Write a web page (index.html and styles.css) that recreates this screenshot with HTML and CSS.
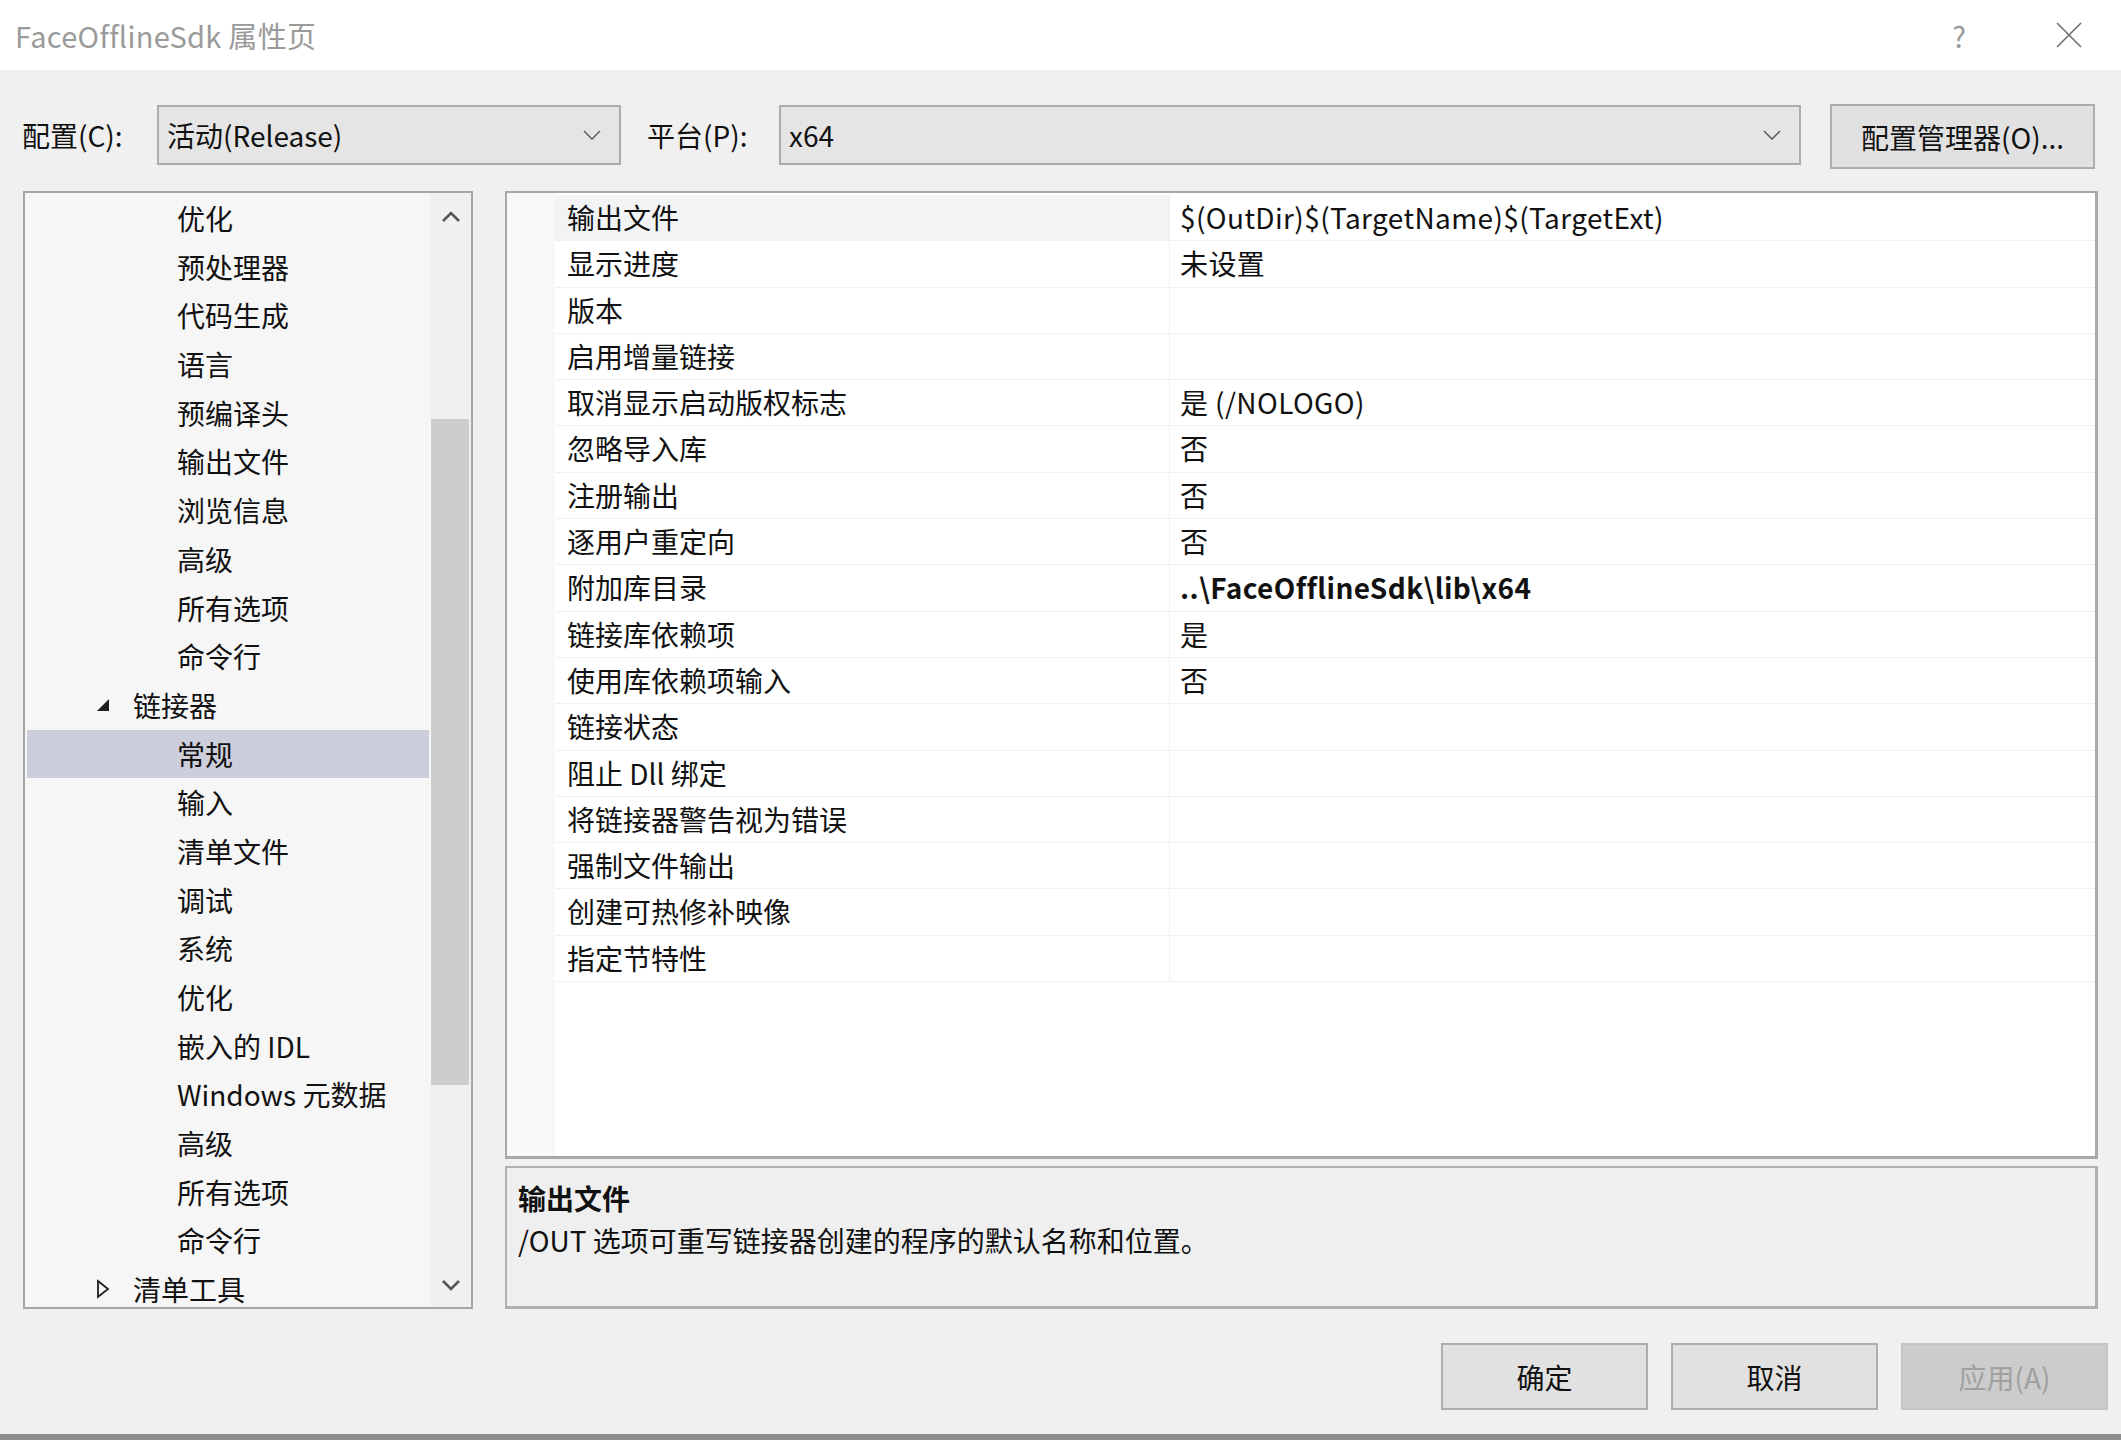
FILE: index.html
```html
<!DOCTYPE html>
<html lang="zh-CN">
<head>
  <meta charset="UTF-8">
  <title>FaceOfflineSdk 属性页</title>
  <link rel="stylesheet" href="styles.css">
</head>
<body>
  <div class="dialog">

    <!-- 标题栏 -->
    <div class="titlebar">
      <span class="title">FaceOfflineSdk 属性页</span>
      <div class="title-btns">
        <span class="help">?</span>
        <svg class="close" width="28" height="28" viewBox="0 0 28 28"><path d="M2 2 L26 26 M26 2 L2 26" stroke="#6f6f6f" stroke-width="1.6" fill="none"/></svg>
      </div>
    </div>

    <!-- 配置 / 平台 -->
    <div class="toolbar">
      <span class="tb-label lbl-config">配置(C):</span>
      <div class="combo combo-config">
        <span>活动(Release)</span>
        <svg width="18" height="10" viewBox="0 0 18 10"><path d="M1 1 L9 9 L17 1" stroke="#555" stroke-width="1.4" fill="none"/></svg>
      </div>
      <span class="tb-label lbl-platform">平台(P):</span>
      <div class="combo combo-platform">
        <span>x64</span>
        <svg width="18" height="10" viewBox="0 0 18 10"><path d="M1 1 L9 9 L17 1" stroke="#555" stroke-width="1.4" fill="none"/></svg>
      </div>
      <button class="mgr-btn">配置管理器(O)...</button>
    </div>

    <div class="main">
      <!-- 左侧树 -->
      <div class="tree">
        <ul class="tree-list">
          <li class="lv2">优化</li>
          <li class="lv2">预处理器</li>
          <li class="lv2">代码生成</li>
          <li class="lv2">语言</li>
          <li class="lv2">预编译头</li>
          <li class="lv2">输出文件</li>
          <li class="lv2">浏览信息</li>
          <li class="lv2">高级</li>
          <li class="lv2">所有选项</li>
          <li class="lv2">命令行</li>
          <li class="lv1"><svg class="tw" width="16" height="16" viewBox="0 0 16 16"><path d="M14 2 L14 14 L2 14 Z" fill="#1e1e1e"/></svg>链接器</li>
          <li class="lv2 selected">常规</li>
          <li class="lv2">输入</li>
          <li class="lv2">清单文件</li>
          <li class="lv2">调试</li>
          <li class="lv2">系统</li>
          <li class="lv2">优化</li>
          <li class="lv2">嵌入的 IDL</li>
          <li class="lv2">Windows 元数据</li>
          <li class="lv2">高级</li>
          <li class="lv2">所有选项</li>
          <li class="lv2">命令行</li>
          <li class="lv1"><svg class="tw" width="16" height="20" viewBox="0 0 16 20"><path d="M3 2 L13 10 L3 18 Z" fill="none" stroke="#1e1e1e" stroke-width="1.8"/></svg>清单工具</li>
        </ul>
        <div class="scrollbar">
          <svg class="sb-arrow" width="20" height="12" viewBox="0 0 20 12"><path d="M2 10 L10 2 L18 10" stroke="#555" stroke-width="2.6" fill="none"/></svg>
          <div class="sb-track"><div class="sb-thumb"></div></div>
          <svg class="sb-arrow" width="20" height="12" viewBox="0 0 20 12"><path d="M2 2 L10 10 L18 2" stroke="#555" stroke-width="2.6" fill="none"/></svg>
        </div>
      </div>

      <!-- 右侧属性表 -->
      <div class="right">
        <div class="grid">
          <div class="row active"><div class="name">输出文件</div><div class="value">$(OutDir)$(TargetName)$(TargetExt)</div></div>
          <div class="row"><div class="name">显示进度</div><div class="value">未设置</div></div>
          <div class="row"><div class="name">版本</div><div class="value"></div></div>
          <div class="row"><div class="name">启用增量链接</div><div class="value"></div></div>
          <div class="row"><div class="name">取消显示启动版权标志</div><div class="value">是 (/NOLOGO)</div></div>
          <div class="row"><div class="name">忽略导入库</div><div class="value">否</div></div>
          <div class="row"><div class="name">注册输出</div><div class="value">否</div></div>
          <div class="row"><div class="name">逐用户重定向</div><div class="value">否</div></div>
          <div class="row"><div class="name">附加库目录</div><div class="value bold">..\FaceOfflineSdk\lib\x64</div></div>
          <div class="row"><div class="name">链接库依赖项</div><div class="value">是</div></div>
          <div class="row"><div class="name">使用库依赖项输入</div><div class="value">否</div></div>
          <div class="row"><div class="name">链接状态</div><div class="value"></div></div>
          <div class="row"><div class="name">阻止 Dll 绑定</div><div class="value"></div></div>
          <div class="row"><div class="name">将链接器警告视为错误</div><div class="value"></div></div>
          <div class="row"><div class="name">强制文件输出</div><div class="value"></div></div>
          <div class="row"><div class="name">创建可热修补映像</div><div class="value"></div></div>
          <div class="row"><div class="name">指定节特性</div><div class="value"></div></div>
        </div>
        <div class="desc">
          <div class="desc-title">输出文件</div>
          <div class="desc-text">/OUT 选项可重写链接器创建的程序的默认名称和位置。</div>
        </div>
      </div>
    </div>

    <div class="footer">
      <button class="btn">确定</button>
      <button class="btn">取消</button>
      <button class="btn disabled">应用(A)</button>
    </div>
    <div class="taskbar"></div>
  </div>
</body>
</html>
```
FILE: styles.css
```css
/* 基础 */
* { box-sizing: border-box; margin: 0; padding: 0; }
body {
  background: #f0f0f0;
  font-family: "Noto Sans CJK SC", "Noto Sans", sans-serif;
  font-size: 28px; color: #111;
  width: 2121px; height: 1440px; overflow: hidden;
}
.dialog { width: 2121px; height: 1440px; display: flex; flex-direction: column; }
.dialog > * { flex: none; }

/* 标题栏 */
.titlebar {
  height: 70px; background: #fff;
  display: flex; align-items: center; justify-content: space-between;
  padding: 0 38px 0 15px;
}
.title { color: #9a9a9a; font-size: 29px; letter-spacing: 0.3px; }
.title-btns { display: flex; align-items: center; gap: 89px; }
.help { color: #9a9a9a; font-size: 29px; }

/* 配置行 */
.toolbar {
  display: flex; align-items: flex-start;
  padding: 35px 26px 0 22px; height: 121px;
}
.tb-label { flex: none; line-height: 60px; }
.lbl-config { width: 135px; }
.lbl-platform { width: 132px; }
.combo {
  flex: none; height: 60px; background: #e5e5e5; border: 2px solid #acacac;
  display: flex; align-items: center; justify-content: space-between;
  padding: 0 18px 0 8px;
}
.combo-config { width: 464px; margin-right: 26px; }
.combo-platform { width: 1022px; margin-right: 29px; }
.mgr-btn {
  width: 265px; height: 65px; margin-top: -1px;
  background: #e1e1e1; border: 2px solid #adadad;
  font: inherit; color: #111;
}

/* 主体 */
.main { display: flex; gap: 32px; padding: 0 23px; height: 1118px; }

/* 左侧树 */
.tree {
  width: 450px; height: 1118px; background: #f6f6f6;
  border: 2px solid #a6a6a6; display: flex; overflow: hidden;
}
.tree-list { list-style: none; flex: 1; padding: 1px 2px 0 2px; }
.tree-list li { height: 48.7px; line-height: 48.7px; white-space: nowrap; }
.tree-list .lv2 { padding-left: 150px; }
.tree-list .lv1 { padding-left: 68px; display: flex; align-items: center; }
.tree-list .lv1 .tw { margin-right: 22px; }
.tree-list .selected { background: #cccedb; }
.scrollbar {
  width: 40px; background: #f0f0f0;
  display: flex; flex-direction: column; align-items: center;
}
.sb-arrow { margin: 18px 0 14px; flex: none; }
.scrollbar .sb-arrow:last-child { margin: 14px 0 16px; }
.sb-track { flex: 1; width: 100%; padding: 182px 2px 180px 0; }
.sb-thumb { height: 100%; background: #cdcdcd; }

/* 右侧属性表 */
.right { flex: 1; display: flex; flex-direction: column; gap: 7px; }
.grid {
  height: 968px; flex: none;
  border: 2px solid #a8a8a8; border-width: 2px 3px 3px 2px;
  padding: 2px 0 0 48px;
  background: #fff linear-gradient(#f8f8f8, #f8f8f8) no-repeat;
  background-size: 48px 100%;
}
.row { display: flex; height: 46.3px; line-height: 45px; border-bottom: 1px solid #f0f0f0; background: #fff; }
.row .name { width: 615px; padding-left: 12px; border-right: 1px solid #f0f0f0; }
.row .value { flex: 1; padding-left: 10px; letter-spacing: 0.4px; }
.row.active .name { background: #f2f3f5; }
.value.bold { font-weight: bold; }

/* 说明 */
.desc {
  flex: 1; background: #efefef;
  border: 2px solid #b0b0b0; border-width: 2px 3px 3px 2px;
  padding: 10px 11px;
}
.desc-title { font-weight: bold; line-height: 40px; }
.desc-text { line-height: 44px; }

/* 底部按钮 */
.footer { display: flex; justify-content: flex-end; gap: 23px; padding: 34px 13px 0 0; height: 125px; }
.btn {
  width: 207px; height: 67px; background: #e1e1e1; border: 2px solid #adadad;
  font: inherit; color: #111;
}
.btn.disabled { background: #cccccc; border-color: #c4c4c4; color: #a0a0a0; }
.taskbar { height: 6px; background: #8c8c8c; }
```
